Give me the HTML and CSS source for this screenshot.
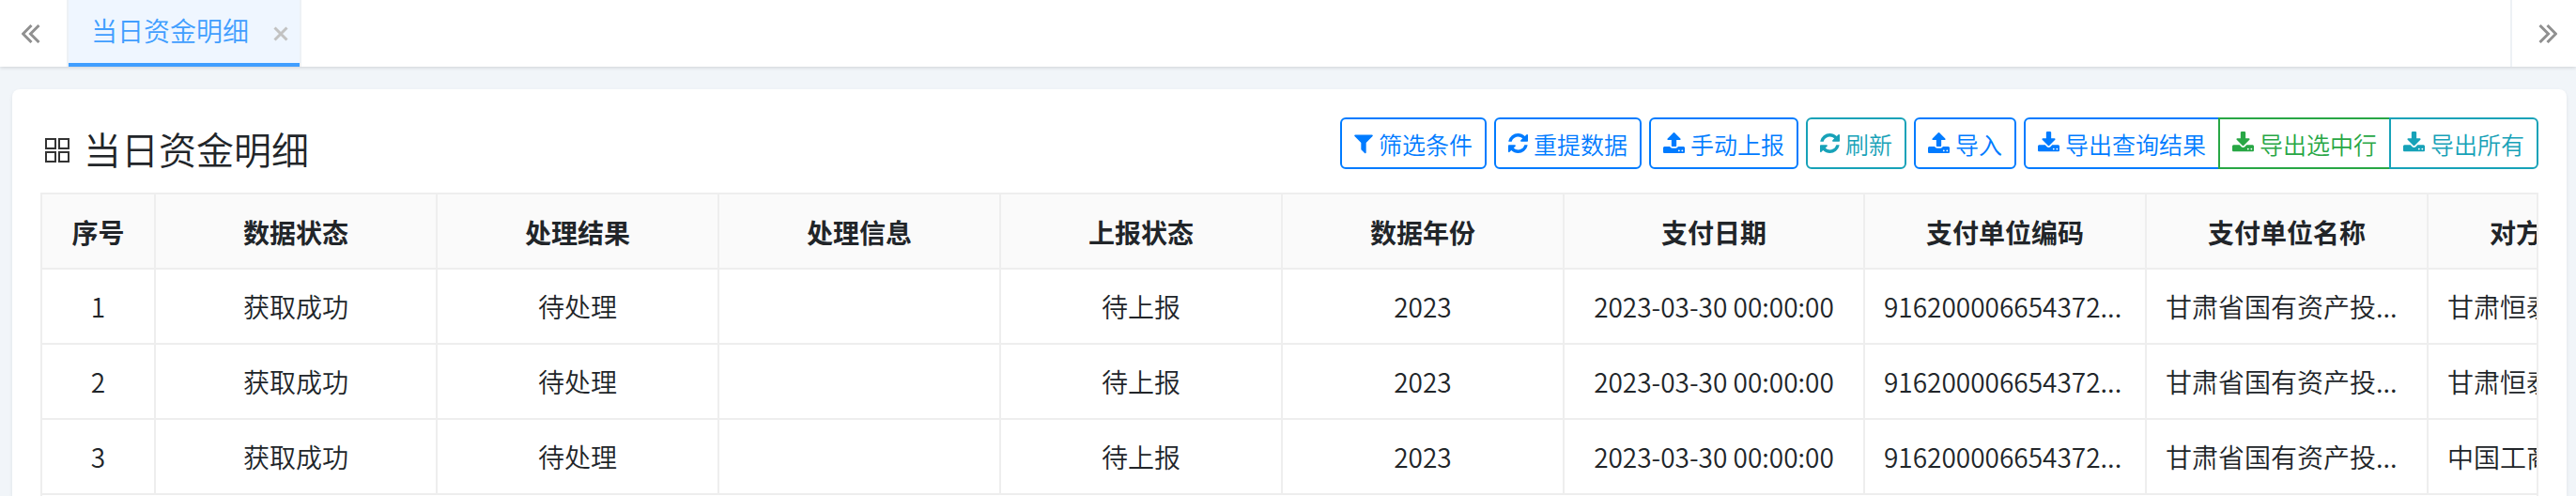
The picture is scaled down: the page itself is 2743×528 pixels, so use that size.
FILE: index.html
```html
<!DOCTYPE html>
<html lang="zh-CN">
<head>
    <meta charset="UTF-8">
    <title>当日资金明细</title>
    <link rel="stylesheet" href="styles.css">
</head>
<body>
    <!-- 图标 -->
    <svg class="icon-defs" aria-hidden="true">
        <symbol id="icon-filter" viewBox="192 0 1408 1792"><path d="M1595 295q17 41-14 70l-493 493v742q0 42-39 59-13 5-25 5-27 0-45-19l-256-256q-19-19-19-45v-486l-493-493q-31-29-14-70 17-39 59-39h1280q42 0 59 39z"/></symbol>
        <symbol id="icon-refresh" viewBox="128 0 1536 1792"><path d="M1639 1056q0 5-1 7-64 268-268 434.5t-478 166.5q-146 0-282.5-55t-243.5-157l-129 129q-19 19-45 19t-45-19-19-45v-448q0-26 19-45t45-19h448q26 0 45 19t19 45-19 45l-137 137q71 66 161 102t187 36q134 0 250-65t186-179q11-17 53-117 8-23 30-23h192q13 0 22.5 9.5t9.5 22.5zm25-800v448q0 26-19 45t-45 19h-448q-26 0-45-19t-19-45 19-45l138-138q-148-137-349-137-134 0-250 65t-186 179q-11 17-53 117-8 23-30 23h-199q-13 0-22.5-9.5t-9.5-22.5v-7q65-268 270-434.5t480-166.5q146 0 284 55.5t245 156.5l130-129q19-19 45-19t45 19 19 45z"/></symbol>
        <symbol id="icon-upload" viewBox="64 0 1664 1792"><path d="M1344 1472q0-26-19-45t-45-19-45 19-19 45 19 45 45 19 45-19 19-45zm256 0q0-26-19-45t-45-19-45 19-19 45 19 45 45 19 45-19 19-45zm128-224v320q0 40-28 68t-68 28h-1472q-40 0-68-28t-28-68v-320q0-40 28-68t68-28h427q21 56 70.5 92t110.5 36h256q61 0 110.5-36t70.5-92h427q40 0 68 28t28 68zm-325-648q-17 40-59 40h-256v448q0 26-19 45t-45 19h-256q-26 0-45-19t-19-45v-448h-256q-42 0-59-40-17-39 14-69l448-448q18-19 45-19t45 19l448 448q31 30 14 69z"/></symbol>
        <symbol id="icon-download" viewBox="64 0 1664 1792"><path d="M1344 1344q0-26-19-45t-45-19-45 19-19 45 19 45 45 19 45-19 19-45zm256 0q0-26-19-45t-45-19-45 19-19 45 19 45 45 19 45-19 19-45zm128-224v320q0 40-28 68t-68 28h-1472q-40 0-68-28t-28-68v-320q0-40 28-68t68-28h465l135 136q58 56 136 56t136-56l136-136h464q40 0 68 28t28 68zm-325-569q17 41-14 70l-448 448q-18 19-45 19t-45-19l-448-448q-31-29-14-70 17-39 59-39h256v-448q0-26 19-45t45-19h256q26 0 45 19t19 45v448h256q42 0 59 39z"/></symbol>
    </svg>

    <!-- 标签页 -->
    <nav class="tab-bar">
        <button type="button" class="tab-scroll tab-prev" aria-label="向左">
            <svg width="20" height="20" viewBox="0 0 20 20"><path d="M10.500 1L1.500 10l9 9M18.500 1l-9 9 9 9"/></svg>
        </button>
        <div class="tab active">
            <a href="#">当日资金明细</a>
            <button type="button" class="tab-close" aria-label="关闭">
                <svg width="16" height="16" viewBox="0 0 16 16"><path d="M1.500 1.500l13 13M14.500 1.500l-13 13"/></svg>
            </button>
        </div>
        <button type="button" class="tab-scroll tab-next" aria-label="向右">
            <svg width="20" height="20" viewBox="0 0 20 20"><path d="M1.500 1l9 9-9 9M9.500 1l9 9-9 9"/></svg>
        </button>
    </nav>

    <main class="card">
        <div class="card-header">
            <h1 class="card-title">
                <svg width="26" height="26" viewBox="0 0 26 26"><path d="M1 1h10v10H1zM15 1h10v10H15zM1 15h10v10H1zM15 15h10v10H15z"/></svg>
                <span>当日资金明细</span>
            </h1>
            <div class="toolbar">
                <button type="button" class="btn btn-primary"><svg class="icon icon-narrow"><use href="#icon-filter"/></svg>筛选条件</button>
                <button type="button" class="btn btn-primary"><svg class="icon"><use href="#icon-refresh"/></svg>重提数据</button>
                <button type="button" class="btn btn-primary"><svg class="icon icon-wide"><use href="#icon-upload"/></svg>手动上报</button>
                <button type="button" class="btn btn-info"><svg class="icon"><use href="#icon-refresh"/></svg>刷新</button>
                <button type="button" class="btn btn-primary"><svg class="icon icon-wide"><use href="#icon-upload"/></svg>导入</button>
                <div class="btn-group">
                    <button type="button" class="btn btn-primary"><svg class="icon icon-wide"><use href="#icon-download"/></svg>导出查询结果</button>
                    <button type="button" class="btn btn-success"><svg class="icon icon-wide"><use href="#icon-download"/></svg>导出选中行</button>
                    <button type="button" class="btn btn-info"><svg class="icon icon-wide"><use href="#icon-download"/></svg>导出所有</button>
                </div>
            </div>
        </div>

        <!-- 数据表格 -->
        <div class="table-box">
            <table class="data-table">
                <colgroup>
                    <col class="col-index">
                    <col><col><col><col><col>
                    <col class="col-date">
                    <col><col><col>
                </colgroup>
                <thead>
                    <tr>
                        <th>序号</th>
                        <th>数据状态</th>
                        <th>处理结果</th>
                        <th>处理信息</th>
                        <th>上报状态</th>
                        <th>数据年份</th>
                        <th>支付日期</th>
                        <th>支付单位编码</th>
                        <th>支付单位名称</th>
                        <th>对方单位名称</th>
                    </tr>
                </thead>
                <tbody>
                    <tr>
                        <td>1</td>
                        <td>获取成功</td>
                        <td>待处理</td>
                        <td></td>
                        <td>待上报</td>
                        <td>2023</td>
                        <td>2023-03-30 00:00:00</td>
                        <td class="long">916200006654372...</td>
                        <td class="long">甘肃省国有资产投...</td>
                        <td class="long">甘肃恒泰...</td>
                    </tr>
                    <tr>
                        <td>2</td>
                        <td>获取成功</td>
                        <td>待处理</td>
                        <td></td>
                        <td>待上报</td>
                        <td>2023</td>
                        <td>2023-03-30 00:00:00</td>
                        <td class="long">916200006654372...</td>
                        <td class="long">甘肃省国有资产投...</td>
                        <td class="long">甘肃恒泰...</td>
                    </tr>
                    <tr>
                        <td>3</td>
                        <td>获取成功</td>
                        <td>待处理</td>
                        <td></td>
                        <td>待上报</td>
                        <td>2023</td>
                        <td>2023-03-30 00:00:00</td>
                        <td class="long">916200006654372...</td>
                        <td class="long">甘肃省国有资产投...</td>
                        <td class="long">中国工商...</td>
                    </tr>
                </tbody>
            </table>
        </div>
    </main>
</body>
</html>
```
FILE: styles.css
```css
* {
    box-sizing: border-box;
}
body {
    display: flex;
    flex-direction: column;
    height: 100vh;
    margin: 0;
    overflow: hidden;
    background-color: #f1f5f9;
    color: #212529;
    font-family: "Noto Sans CJK SC", sans-serif;
    font-size: 28px;
    font-weight: 350;
}
button {
    padding: 0;
    border: none;
    background: none;
    font: inherit;
    cursor: pointer;
}
.icon-defs {
    display: none;
}

/* 标签页 */
.tab-bar {
    display: flex;
    flex: none;
    height: 71px;
    background-color: #fff;
    box-shadow: 0 1px 4px rgba(0, 0, 0, 0.15);
}
.tab-bar svg {
    display: block;
    fill: none;
    stroke: #909090;
    stroke-width: 3;
}
.tab-scroll {
    display: flex;
    align-items: center;
    justify-content: center;
    width: 70px;
}
.tab-prev {
    width: 73px;
    padding-right: 6px;
    border-right: 2px solid #edf1f5;
}
.tab-next {
    margin-left: auto;
    padding-left: 8px;
    border-left: 2px solid #edf1f5;
}
.tab {
    display: flex;
    align-items: center;
    gap: 26px;
    padding: 0 12px 0 24px;
    border-right: 2px solid #edf1f5;
}
.tab a {
    padding-bottom: 8px;
    color: #409eff;
    text-decoration: none;
}
.tab.active {
    background-color: #eff6ff;
    box-shadow: inset 0 -4px #409eff;
}
.tab-bar .tab-close svg {
    stroke: #c2c2c2;
}

/* 内容卡片 */
.card {
    display: flex;
    flex: 1;
    flex-direction: column;
    min-height: 0;
    margin: 24px 10px 0 13px;
    padding: 30px 30px 0;
    border-radius: 8px 8px 0 0;
    background-color: #fff;
    box-shadow: 0 2px 4px rgba(0, 0, 0, 0.08);
}
.card-header {
    display: flex;
    justify-content: space-between;
    height: 80px;
}
.card-title {
    display: flex;
    align-items: center;
    gap: 15px;
    height: 69px;
    margin: 0;
    padding-left: 5px;
    font-size: 40px;
    font-weight: 350;
}
.card-title svg {
    fill: none;
    stroke: #333;
    stroke-width: 2;
}
.card-title span {
    padding-bottom: 4px;
}
.toolbar {
    display: flex;
    align-items: flex-start;
    gap: 8px;
}
.btn {
    display: flex;
    align-items: center;
    gap: 6px;
    height: 55px;
    padding: 0 13px;
    border: 2px solid;
    border-radius: 6px;
    font-size: 25px;
    white-space: nowrap;
}
.btn-primary {
    color: #007bff;
}
.btn-info {
    color: #17a2b8;
}
.btn-success {
    color: #28a745;
}
.btn-group {
    display: flex;
}
.btn-group .btn {
    margin-left: -2px;
    border-radius: 0;
}
.btn-group .btn:first-child {
    margin-left: 0;
    border-radius: 6px 0 0 6px;
}
.btn-group .btn:last-child {
    border-radius: 0 6px 6px 0;
}
.icon {
    width: 21px;
    height: 25px;
    fill: currentColor;
}
.icon-narrow {
    width: 20px;
}
.icon-wide {
    width: 23px;
}

/* 数据表格 */
.table-box {
    flex: 1;
    min-height: 0;
    overflow: hidden;
    border: 2px solid #eee;
    border-bottom: none;
}
.data-table {
    width: 2841px;
    border-collapse: separate;
    border-spacing: 0;
    table-layout: fixed;
}
.col-index {
    width: 121px;
}
.col-date {
    width: 320px;
}
.data-table th,
.data-table td {
    height: 80px;
    padding: 0 20px;
    overflow: hidden;
    border-right: 2px solid #eee;
    border-bottom: 2px solid #eee;
    text-align: center;
    white-space: nowrap;
}
.data-table th {
    padding-top: 2px;
    background-color: #fafafa;
    font-weight: 700;
}
.data-table .long {
    text-align: left;
}
```
